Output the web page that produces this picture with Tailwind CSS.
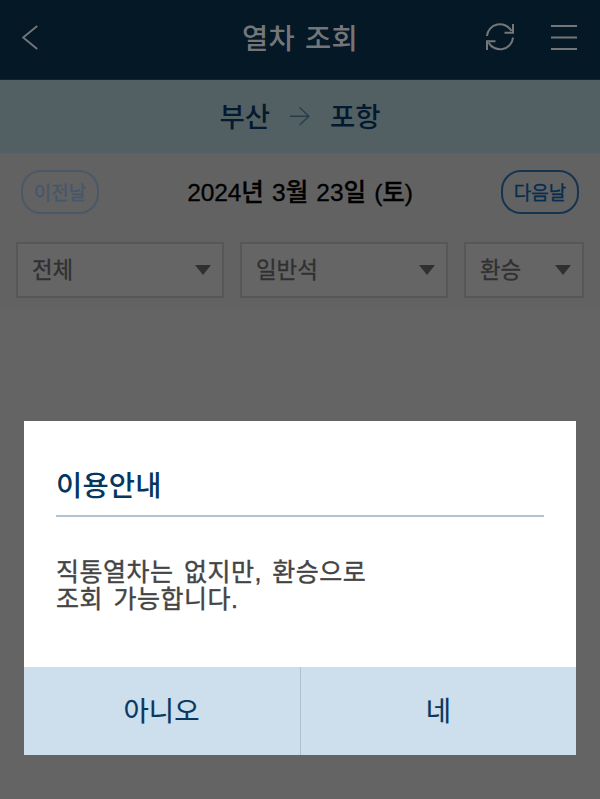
<!DOCTYPE html>
<html lang="ko">
<head>
<meta charset="utf-8">
<title>열차 조회</title>
<script src="https://cdn.jsdelivr.net/npm/@tailwindcss/browser@4"></script>
</head>
<body class="relative h-[799px] w-[600px] overflow-hidden bg-[#646464] font-['Liberation_Sans','Noto_Sans_CJK_KR',sans-serif]">
<header class="grid h-20 grid-cols-[1fr_auto_1fr] items-center border-b border-[#0b2630] bg-[#041825] pr-[23px] pl-[22px] text-[#747679]">
  <svg class="-mt-1.5 h-7 w-4" viewBox="0 0 16 28" fill="none" stroke="currentColor" stroke-width="1.8"><path d="M15.2 3 1.2 14.5 15.2 26"/></svg>
  <h1 class="pl-px text-[28.5px] leading-none font-medium tracking-[0.2px] whitespace-nowrap [word-spacing:2px]">열차 조회</h1>
  <div class="-mt-1.5 flex items-center justify-end gap-[37px]">
    <svg class="h-7 w-7" viewBox="0 0 28 28" fill="none" stroke="currentColor" stroke-width="2"><path d="M1 13A13 12.5 0 0 1 25.5 8M27 14.5A13 12.5 0 0 1 2.5 19.5"/><path d="M27 1V9.7H18.5M1 27V18.3H9.5"/></svg>
    <svg class="h-7 w-[26px]" viewBox="0 0 26 28" stroke="currentColor" stroke-width="2"><path d="M0 3H26M0 14.5H26M0 26H26"/></svg>
  </div>
</header>
<section class="flex h-[73px] items-center justify-center gap-5 bg-[#536063] text-[27.5px] leading-none font-medium text-[#031a2f]">
  <span class="pt-[3px]">부산</span>
  <svg class="h-5 w-5" viewBox="0 0 20 20" fill="none" stroke="#273d4b" stroke-width="1.4"><path d="M0 9.3H19M9.5 .5 19 9.3 9.5 18"/></svg>
  <span class="pt-[3px]">포항</span>
</section>
<section class="h-[155px] bg-[#626262] pt-[17px]">
  <div class="flex items-center justify-between px-[21px]">
    <button class="h-[44px] w-[78px] rounded-[20px] border-2 border-[#4a5868] pt-[3px] text-[19px] leading-none text-[#45576a] [-webkit-text-stroke:0.3px]">이전날</button>
    <p class="pt-0.5 text-[24.5px] leading-none font-medium tracking-[-0.1px] whitespace-nowrap text-black [-webkit-text-stroke:0.3px] [word-spacing:1.6px]">2024년 3월 23일 (토)</p>
    <button class="h-[44px] w-[78px] rounded-[20px] border-2 border-[#153452] pt-[3px] text-[19px] leading-none text-[#062c50] [-webkit-text-stroke:0.3px]">다음날</button>
  </div>
  <div class="mt-7 grid grid-cols-[208px_208px_120px] gap-4 px-4 text-[22.4px] leading-none text-[#303030]">
    <div class="flex h-14 items-center justify-between border-2 border-[#575757] bg-[#656565] pr-[11px] pl-[14px]"><span class="pt-[3px] [-webkit-text-stroke:0.3px]">전체</span><svg class="h-[10px] w-4" viewBox="0 0 16 10"><path d="M0 0H16L8 10Z" fill="#303030"/></svg></div>
    <div class="flex h-14 items-center justify-between border-2 border-[#575757] bg-[#656565] pr-[11px] pl-[14px]"><span class="pt-[3px] [-webkit-text-stroke:0.3px]">일반석</span><svg class="h-[10px] w-4" viewBox="0 0 16 10"><path d="M0 0H16L8 10Z" fill="#303030"/></svg></div>
    <div class="flex h-14 items-center justify-between border-2 border-[#575757] bg-[#656565] pr-[11px] pl-[14px]"><span class="pt-[3px] [-webkit-text-stroke:0.3px]">환승</span><svg class="h-[10px] w-4" viewBox="0 0 16 10"><path d="M0 0H16L8 10Z" fill="#303030"/></svg></div>
  </div>
</section>
<div role="dialog" class="absolute top-[421px] left-6 flex h-[334px] w-[552px] flex-col bg-white">
  <div class="flex-1 px-8 pt-[50px]">
    <h2 class="h-[46px] border-b-2 border-[#b3c2d1] text-[28.5px] leading-[30px] font-medium tracking-[0.2px] text-[#05365f]">이용안내</h2>
    <p class="mt-[42px] text-[25px] leading-[27px] tracking-[0.5px] text-[#444] [-webkit-text-stroke:0.4px] [word-spacing:3px]">직통열차는 없지만, 환승으로<br>조회 가능합니다.</p>
  </div>
  <div class="grid h-[88px] grid-cols-[277px_275px] bg-[#cddfec] text-[27.5px] leading-none text-[#063860] [-webkit-text-stroke:0.2px]">
    <button class="border-r border-[#b1c2cf] pt-px pr-px">아니오</button>
    <button class="pt-px">네</button>
  </div>
</div>
</body>
</html>
